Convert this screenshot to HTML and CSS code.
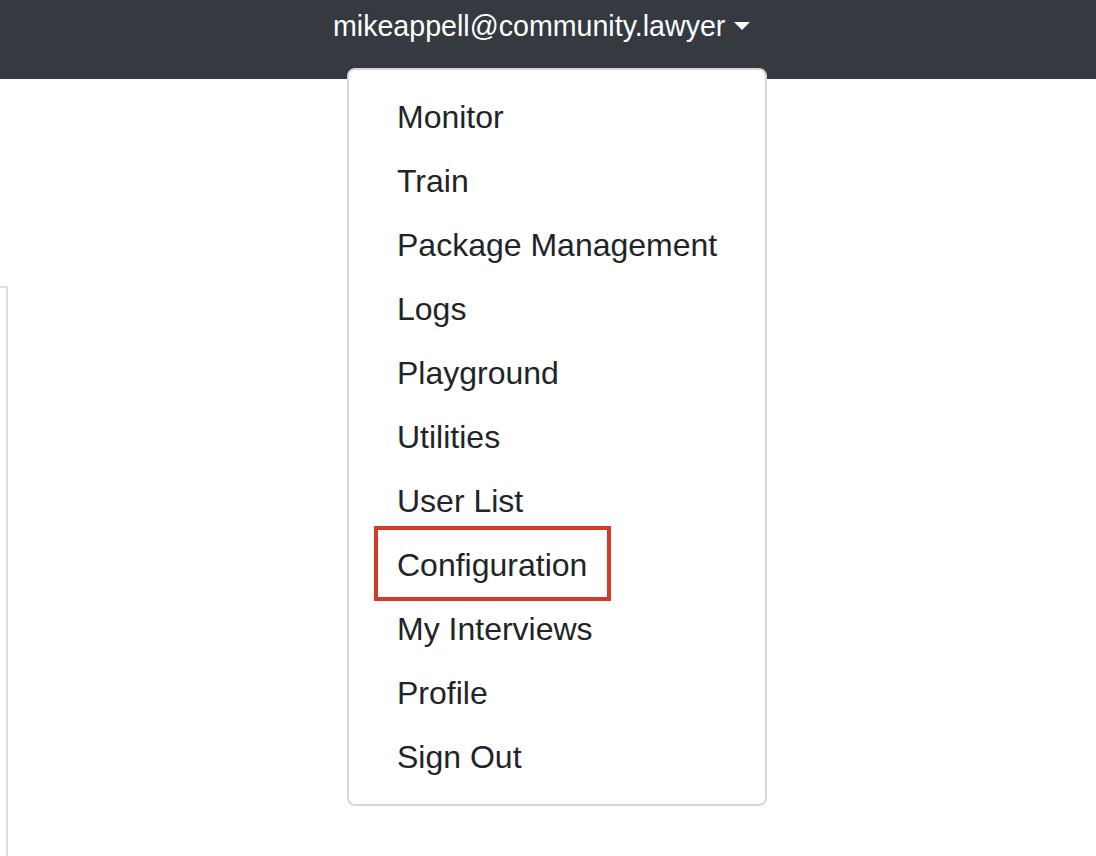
FILE: index.html
```html
<!DOCTYPE html>
<html>
<head>
<meta charset="utf-8">
<link rel="stylesheet" href="styles.css">
</head>
<body>
<nav class="navbar">
  <div class="nav-dropdown">
    <a class="nav-toggle">mikeappell@community.lawyer<span class="caret"></span></a>
    <div class="dropdown-menu">
      <a class="dropdown-item">Monitor</a>
      <a class="dropdown-item">Train</a>
      <a class="dropdown-item">Package Management</a>
      <a class="dropdown-item">Logs</a>
      <a class="dropdown-item">Playground</a>
      <a class="dropdown-item">Utilities</a>
      <a class="dropdown-item">User List</a>
      <a class="dropdown-item highlight">Configuration</a>
      <a class="dropdown-item">My Interviews</a>
      <a class="dropdown-item">Profile</a>
      <a class="dropdown-item">Sign Out</a>
    </div>
  </div>
</nav>
<main class="content">
  <div class="side-card"></div>
</main>
</body>
</html>
```

FILE: styles.css
```css
html, body {
  margin: 0;
  padding: 0;
  background: #ffffff;
  font-family: "Liberation Sans", Arial, sans-serif;
  overflow: hidden;
  height: 856px;
}

.navbar {
  height: 79px;
  background: #343a40;
  display: flex;
  align-items: flex-start;
  padding-left: 333px;
  position: relative;
  z-index: 2;
}

.nav-dropdown {
  position: relative;
}

.nav-toggle {
  display: inline-flex;
  align-items: center;
  color: #ffffff;
  font-size: 28.6px;
  line-height: 43px;
  padding-top: 5px;
  white-space: nowrap;
}

.caret {
  display: inline-block;
  width: 0;
  height: 0;
  margin-left: 9px;
  margin-top: -1px;
  border-top: 8px solid #ffffff;
  border-left: 8px solid transparent;
  border-right: 8px solid transparent;
}

.dropdown-menu {
  position: absolute;
  left: 14px;
  top: 68px;
  width: 420px;
  box-sizing: border-box;
  background: #ffffff;
  border: 2px solid #d6d6d6;
  border-radius: 8px;
  padding: 15px 0 15px;
  display: flex;
  flex-direction: column;
}

.dropdown-item {
  position: relative;
  display: block;
  padding: 8px 48px;
  font-size: 32px;
  line-height: 48px;
  color: #212529;
  white-space: nowrap;
}

.dropdown-item.highlight::after {
  content: "";
  position: absolute;
  left: 25px;
  top: -7px;
  width: 237px;
  height: 75px;
  box-sizing: border-box;
  border: 4px solid #d33b29;
}

.content {
  padding-top: 207px;
}

.side-card {
  width: 6px;
  height: 568px;
  border-top: 2px solid #dfdfdf;
  border-right: 2px solid #dfdfdf;
}
```
